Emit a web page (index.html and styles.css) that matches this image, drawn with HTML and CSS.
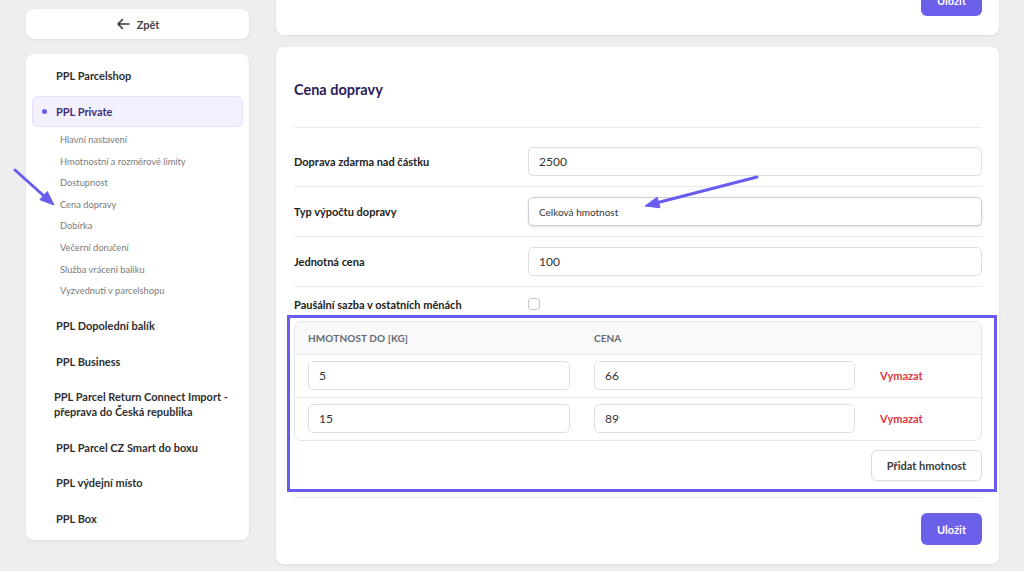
FILE: index.html
```html
<!DOCTYPE html>
<html lang="cs">
<head>
<meta charset="utf-8">
<title>Cena dopravy</title>
<link rel="stylesheet" href="styles.css">
</head>
<body>
<div class="page">
  <aside class="sidebar">
    <div class="card back">
      <svg class="back-icon" width="14" height="12" viewBox="0 0 14 12"><path d="M13 6H2M6.5 1.5L2 6l4.5 4.5" fill="none" stroke="#3b3b3b" stroke-width="1.6" stroke-linecap="round" stroke-linejoin="round"/></svg>
      <span>Zpět</span>
    </div>
    <nav class="card nav">
      <div class="nav-item">PPL Parcelshop</div>
      <div class="nav-item active"><span class="dot"></span>PPL Private</div>
      <ul class="sub">
        <li>Hlavní nastavení</li>
        <li>Hmotnostní a rozměrové limity</li>
        <li>Dostupnost</li>
        <li>Cena dopravy</li>
        <li>Dobírka</li>
        <li>Večerní doručení</li>
        <li>Služba vrácení balíku</li>
        <li>Vyzvednutí v parcelshopu</li>
      </ul>
      <div class="nav-item first-after">PPL Dopolední balík</div>
      <div class="nav-item">PPL Business</div>
      <div class="nav-item multi">PPL Parcel Return Connect Import -<br>přeprava do Česká republika</div>
      <div class="nav-item">PPL Parcel CZ Smart do boxu</div>
      <div class="nav-item">PPL výdejní místo</div>
      <div class="nav-item">PPL Box</div>
    </nav>
  </aside>

  <main class="main">
    <div class="card top-card">
      <button class="btn-primary">Uložit</button>
    </div>
    <section class="card settings">
      <header class="settings-head"><h2>Cena dopravy</h2></header>
      <div class="form">
        <div class="row">
          <label class="label">Doprava zdarma nad částku</label>
          <div class="input">2500</div>
        </div>
        <div class="row">
          <label class="label">Typ výpočtu dopravy</label>
          <div class="input select">Celková hmotnost</div>
        </div>
        <div class="row">
          <label class="label">Jednotná cena</label>
          <div class="input">100</div>
        </div>
        <div class="row row-check">
          <label class="label">Paušální sazba v ostatních měnách</label>
          <span class="checkbox"></span>
        </div>
        <div class="highlight">
          <div class="table">
            <div class="t-head">
              <span>Hmotnost do [kg]</span>
              <span>Cena</span>
              <span></span>
            </div>
            <div class="t-row">
              <div class="input">5</div>
              <div class="input">66</div>
              <span class="delete">Vymazat</span>
            </div>
            <div class="t-row">
              <div class="input">15</div>
              <div class="input">89</div>
              <span class="delete">Vymazat</span>
            </div>
          </div>
          <div class="add-row">
            <button class="btn-secondary">Přidat hmotnost</button>
          </div>
        </div>
      </div>
      <footer class="settings-foot">
        <button class="btn-primary">Uložit</button>
      </footer>
    </section>
  </main>

  <svg class="annotations" width="1024" height="571" viewBox="0 0 1024 571">
    <g fill="#6a5cf0" stroke="#6a5cf0">
      <line x1="15" y1="170" x2="44" y2="196" stroke-width="3" stroke-linecap="round"/>
      <polygon points="54,205 47.3,191.5 39.9,199.7" stroke-width="1" stroke-linejoin="round"/>
      <line x1="757" y1="177" x2="658" y2="202.5" stroke-width="3" stroke-linecap="round"/>
      <polygon points="645,206 660,207.8 657.2,197.2" stroke-width="1" stroke-linejoin="round"/>
    </g>
  </svg>
</div>
</body>
</html>
```

FILE: styles.css
```css
* { box-sizing: border-box; }

html, body {
  margin: 0;
  height: 100%;
  overflow: hidden;
}

body {
  background: #eeeeee;
  font-family: Lato, "Noto Sans", "Liberation Sans", sans-serif;
  color: #2f2f2f;
}

.page {
  position: relative;
  display: grid;
  grid-template-columns: 223px 723px;
  column-gap: 27px;
  padding: 9px 0 0 26px;
  align-items: start;
}

.card {
  background: #ffffff;
  border-radius: 8px;
  box-shadow: 0 1px 3px rgba(0, 0, 0, 0.07);
}

/* Sidebar */
.sidebar {
  display: flex;
  flex-direction: column;
  gap: 15px;
}

.back {
  height: 30px;
  display: flex;
  align-items: center;
  justify-content: center;
  gap: 7px;
  font-size: 11px;
  font-weight: 700;
  color: #454545;
}

.back-icon { display: block; }

.nav {
  padding: 6px;
  display: flex;
  flex-direction: column;
  gap: 4.5px;
}

.nav-item {
  padding: 7px 4px 7px 23px;
  line-height: 15px;
  font-size: 11px;
  font-weight: 700;
  color: #2f2f2f;
  border: 1px solid transparent;
  border-radius: 6px;
  position: relative;
}

.nav-item.active {
  background: #f4f1fe;
  border-color: #e6e0fb;
  color: #3d2e7c;
  margin-top: 0.5px;
}

.nav-item.multi {
  padding-left: 21px;
}

.dot {
  position: absolute;
  left: 9px;
  top: 12px;
  width: 5px;
  height: 5px;
  border-radius: 50%;
  background: #6a5cf0;
}

.sub {
  list-style: none;
  margin: -2.5px 0 0;
  padding: 0 0 0 28px;
}

.sub li {
  height: 21.6px;
  line-height: 21.6px;
  font-size: 9.3px;
  color: #7a7a7a;
  white-space: nowrap;
}

.nav-item.first-after {
  margin-top: 4px;
}

/* Main */
.main {
  margin-top: -39px;
  display: flex;
  flex-direction: column;
  gap: 12px;
}

.top-card {
  padding: 14px 17px 19px;
  display: flex;
  justify-content: flex-end;
}

.btn-primary {
  width: 61px;
  height: 32px;
  border: none;
  border-radius: 6px;
  background: #6c5fe9;
  color: #ffffff;
  font-family: inherit;
  font-size: 11px;
  font-weight: 700;
  padding: 0;
}

.settings {
  padding: 0 17px 19px 18px;
}

.settings-head {
  height: 81px;
  border-bottom: 1px solid #ebebef;
}

.settings-head h2 {
  margin: 0;
  padding-top: 34px;
  line-height: 18px;
  font-size: 14.5px;
  font-weight: 700;
  color: #2b1b5c;
}

.form {
  padding-top: 9px;
}

.row {
  display: grid;
  grid-template-columns: 234px 1fr;
  align-items: center;
  padding: 10px 0;
  border-bottom: 1px solid #ebebef;
}

.label {
  font-size: 11px;
  font-weight: 700;
  color: #222222;
}

.input {
  height: 29px;
  display: flex;
  align-items: center;
  padding-left: 10px;
  border: 1px solid #dedfe4;
  border-radius: 5px;
  background: #ffffff;
  font-size: 12px;
  color: #333333;
}

.input.select {
  font-size: 10px;
  border-color: #cdced6;
  box-shadow: 0 1px 3px rgba(0, 0, 0, 0.13);
}

.row-check {
  padding: 10px 0 0;
  border-bottom: none;
  height: 24px;
  align-items: center;
}

.checkbox {
  width: 12px;
  height: 12px;
  border: 1px solid #c8c8cf;
  border-radius: 3px;
  background: #ffffff;
}

.highlight {
  margin: 4px -15px 0 -7px;
  padding: 3px 12px 8px 4px;
  border: 3px solid #6a5cf0;
}

.table {
  border: 1px solid #e3e5ea;
  border-radius: 7px;
  overflow: hidden;
}

.t-head,
.t-row {
  display: grid;
  grid-template-columns: 262px 261px 1fr;
  column-gap: 24px;
  padding: 0 13px;
  align-items: center;
}

.t-head {
  height: 32px;
  background: #f8f9fb;
  font-size: 10px;
  font-weight: 700;
  text-transform: uppercase;
  color: #666a70;
  letter-spacing: 0.1px;
}

.t-row {
  padding-top: 6px;
  padding-bottom: 7px;
  border-top: 1px solid #e8eaee;
}

.delete {
  font-size: 11px;
  font-weight: 700;
  color: #e0383e;
  padding-left: 1px;
}

.add-row {
  display: flex;
  justify-content: flex-end;
  margin-top: 9px;
}

.btn-secondary {
  height: 31px;
  width: 111px;
  padding: 0;
  border: 1px solid #dcdde2;
  border-radius: 6px;
  background: #ffffff;
  box-shadow: 0 1px 2px rgba(0, 0, 0, 0.06);
  font-family: inherit;
  font-size: 11px;
  font-weight: 700;
  color: #3c3c3c;
}

.settings-foot {
  margin-top: 5px;
  padding-top: 15px;
  border-top: 1px solid #ebebef;
  display: flex;
  justify-content: flex-end;
}

.annotations {
  position: absolute;
  left: 0;
  top: 0;
  pointer-events: none;
}
```
